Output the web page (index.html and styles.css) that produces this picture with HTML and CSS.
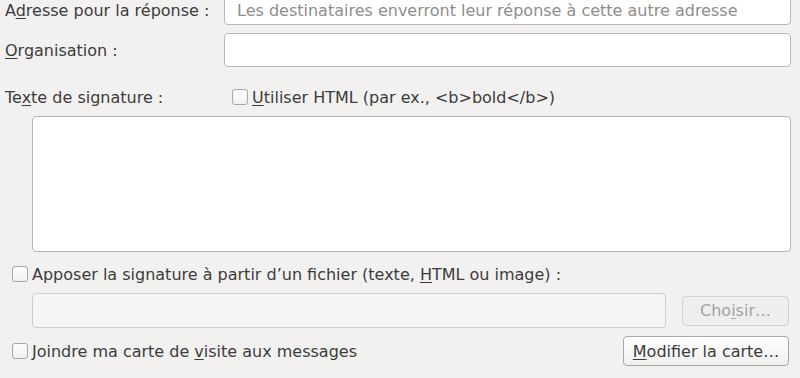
FILE: index.html
```html
<!DOCTYPE html>
<html lang="fr">
<head>
  <meta charset="UTF-8">
  <title>Identité</title>
  <link rel="stylesheet" href="styles.css">
</head>
<body>
  <div class="panel">
    <div class="row row-first">
      <span class="row-label">A<u>d</u>resse pour la réponse :</span>
      <div class="field placeholder">Les destinataires enverront leur réponse à cette autre adresse</div>
    </div>
    <div class="row row-org">
      <span class="row-label"><u>O</u>rganisation :</span>
      <div class="field"></div>
    </div>

    <div class="sig-head">
      <span class="row-label">Te<u>x</u>te de signature :</span>
      <span class="check"></span>
      <span><u>U</u>tiliser HTML (par ex., &lt;b&gt;bold&lt;/b&gt;)</span>
    </div>
    <div class="sig-box"></div>

    <div class="check-row">
      <span class="check"></span>
      <span>Apposer la signature à partir d’un fichier (texte, <u>H</u>TML ou image) :</span>
    </div>
    <div class="file-row">
      <div class="file-field"></div>
      <span class="btn btn-off">Cho<u>i</u>sir…</span>
    </div>

    <div class="check-row card-row">
      <span class="check"></span>
      <span class="grow">Joindre ma carte de <u>v</u>isite aux messages</span>
      <span class="btn"><u>M</u>odifier la carte…</span>
    </div>
  </div>
</body>
</html>
```

FILE: styles.css
```css
body {
  margin: 0;
  background: #f2f1f0;
  font-family: "DejaVu Sans", sans-serif;
  font-size: 16px;
  color: #3c3c3c;
  overflow: hidden;
}

u {
  text-underline-offset: 2px;
}

.panel {
  padding: 0 9px 0 5px;
  margin-top: -9px;
}

.row {
  display: flex;
  align-items: center;
  height: 34px;
}

.row-first {
  align-items: flex-end;
}

.row-first .row-label {
  padding-bottom: 5px;
}

.row-org {
  margin-top: 8px;
}

.row-label {
  width: 219px;
  flex-shrink: 0;
}

.field {
  flex: 1;
  height: 34px;
  box-sizing: border-box;
  border: 1px solid #b9b8b4;
  border-radius: 4px;
  background: #fff;
  padding: 4px 0 0 12px;
  display: flex;
  align-items: center;
}

.placeholder {
  color: #8e8e8c;
}

.sig-head {
  display: flex;
  align-items: center;
  height: 28px;
  margin-top: 16px;
}

.sig-head .row-label {
  width: 227px;
}

.check {
  width: 14px;
  height: 14px;
  border: 1px solid #a8a7a3;
  border-radius: 3px;
  background: linear-gradient(#fdfdfd, #f1f1f0);
  margin-right: 4px;
  flex-shrink: 0;
}

.sig-box {
  margin: 5px 0 0 27px;
  height: 136px;
  box-sizing: border-box;
  border: 1px solid #b9b8b4;
  border-radius: 4px;
  background: #fff;
}

.check-row {
  display: flex;
  align-items: center;
  height: 28px;
  margin-top: 8px;
  padding-left: 7px;
}

.file-row {
  display: flex;
  align-items: center;
  margin: 5px 2px 0 27px;
  gap: 16px;
}

.file-field {
  flex: 1;
  height: 35px;
  box-sizing: border-box;
  border: 1px solid #cfcecb;
  border-radius: 4px;
  background: #f5f5f4;
}

.btn {
  height: 30px;
  box-sizing: border-box;
  padding: 0 8px;
  border: 1px solid #a9a8a4;
  border-radius: 4px;
  background: linear-gradient(#ffffff, #efefee);
  display: flex;
  align-items: center;
  justify-content: center;
  white-space: nowrap;
}

.btn-off {
  width: 107px;
  border-color: #d2d1ce;
  background: #efeeed;
  color: #a3a3a1;
}

.card-row {
  height: 30px;
  margin-right: 2px;
}

.card-row .btn {
  width: 166px;
}

.grow {
  flex: 1;
}
```
